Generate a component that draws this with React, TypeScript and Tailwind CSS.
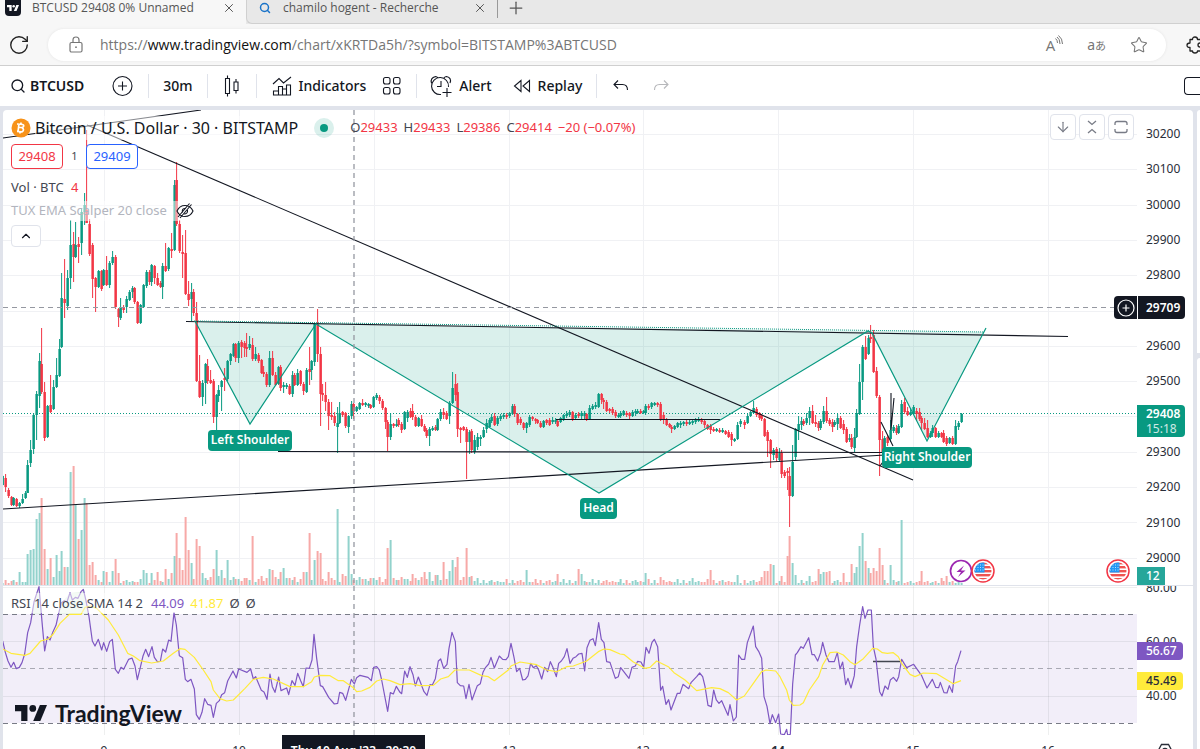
import type { ReactNode } from 'react';
import { ArrowDown, ChevronUp, Plus, RotateCw, Search, Star, X } from 'lucide-react';

// x, high, body top, body bottom, low, 1 = rising
type Candle = [number, number, number, number, number, 0 | 1];

const candles: Candle[] = [
  [3, 475, 476, 485, 486, 1], [6, 474, 478, 487, 492, 0], [9, 488, 490, 496, 498, 0], [12, 496, 497, 505, 506, 0],
  [14, 497, 498, 505, 506, 1], [17, 498, 499, 506, 507, 0], [20, 502, 503, 506, 508, 1], [23, 494, 499, 503, 504, 1],
  [26, 491, 493, 498, 499, 1], [28, 460, 465, 493, 493, 1], [31, 440, 450, 463, 467, 1], [34, 413, 415, 449, 454, 1],
  [37, 391, 394, 415, 440, 1], [40, 353, 361, 396, 408, 1], [42, 328, 364, 392, 394, 0], [45, 382, 392, 438, 441, 0],
  [48, 405, 406, 437, 438, 1], [51, 375, 405, 412, 413, 0], [54, 380, 387, 409, 410, 1], [57, 358, 375, 387, 388, 1],
  [60, 339, 349, 376, 377, 1], [62, 273, 298, 347, 348, 1], [65, 259, 299, 303, 318, 0], [68, 270, 278, 306, 310, 1],
  [71, 220, 245, 278, 289, 1], [74, 232, 244, 257, 282, 0], [76, 222, 245, 257, 258, 1], [79, 237, 244, 247, 263, 0],
  [82, 208, 212, 243, 255, 1], [85, 193, 205, 212, 225, 1], [87, 130, 210, 223, 223, 0], [90, 219, 224, 254, 256, 0],
  [93, 243, 245, 279, 298, 0], [96, 277, 278, 287, 312, 0], [99, 270, 271, 287, 288, 1], [102, 270, 271, 289, 291, 0],
  [104, 269, 270, 285, 286, 1], [107, 256, 270, 285, 286, 0], [110, 261, 263, 285, 288, 1], [113, 251, 257, 263, 265, 1],
  [116, 255, 257, 307, 309, 0], [119, 308, 309, 317, 327, 0], [121, 298, 307, 318, 320, 1], [124, 305, 307, 310, 313, 0],
  [127, 296, 299, 307, 313, 1], [130, 290, 292, 300, 301, 1], [133, 286, 288, 292, 298, 1], [135, 287, 288, 302, 304, 0],
  [138, 301, 302, 323, 324, 0], [141, 304, 305, 323, 324, 1], [144, 284, 285, 307, 308, 1], [147, 270, 272, 286, 288, 1],
  [150, 270, 272, 282, 285, 0], [152, 264, 265, 282, 286, 1], [155, 265, 266, 278, 284, 0], [158, 273, 278, 285, 286, 0],
  [161, 281, 283, 287, 288, 0], [163, 263, 266, 287, 299, 1], [166, 243, 266, 271, 272, 0], [169, 247, 248, 269, 271, 1],
  [172, 233, 249, 251, 258, 0], [175, 180, 185, 250, 251, 1], [177, 162, 180, 224, 226, 0], [180, 220, 224, 251, 253, 0],
  [183, 235, 252, 254, 278, 0], [186, 230, 253, 294, 295, 0], [189, 281, 294, 300, 306, 0], [192, 283, 292, 299, 321, 1],
  [194, 289, 292, 313, 316, 0], [197, 302, 313, 381, 382, 0], [200, 355, 381, 397, 398, 0], [203, 380, 383, 397, 406, 1],
  [206, 363, 364, 383, 404, 1], [208, 359, 366, 381, 384, 0], [211, 370, 380, 383, 384, 0], [214, 379, 381, 417, 423, 0],
  [217, 394, 395, 417, 430, 1], [219, 385, 390, 396, 402, 1], [222, 380, 381, 387, 411, 1], [225, 368, 378, 380, 391, 0],
  [228, 360, 361, 379, 381, 1], [231, 353, 354, 361, 365, 1], [234, 343, 344, 356, 357, 1], [236, 343, 344, 358, 362, 0],
  [239, 341, 343, 358, 363, 1], [242, 340, 342, 347, 358, 0], [245, 341, 343, 348, 357, 0], [247, 333, 347, 349, 357, 0],
  [250, 336, 344, 348, 350, 1], [253, 338, 345, 359, 361, 0], [256, 347, 354, 359, 361, 1], [259, 353, 355, 361, 363, 0],
  [262, 359, 360, 373, 374, 0], [264, 366, 372, 374, 377, 0], [267, 372, 374, 385, 387, 0], [270, 351, 358, 385, 387, 1],
  [273, 351, 358, 375, 376, 0], [276, 372, 375, 385, 386, 0], [279, 366, 367, 384, 385, 1], [281, 365, 367, 388, 391, 0],
  [284, 382, 385, 387, 393, 1], [287, 383, 385, 387, 389, 1], [290, 384, 386, 394, 395, 0], [293, 371, 375, 394, 397, 1],
  [295, 373, 375, 385, 386, 0], [298, 369, 373, 385, 386, 1], [301, 370, 371, 384, 386, 0], [304, 382, 384, 391, 395, 0],
  [307, 368, 370, 392, 393, 1], [310, 347, 369, 372, 385, 0], [312, 360, 361, 370, 380, 1], [315, 323, 324, 362, 366, 1],
  [318, 309, 324, 354, 362, 0], [321, 347, 354, 394, 426, 0], [323, 384, 393, 395, 401, 0], [326, 382, 395, 402, 411, 0],
  [329, 399, 402, 416, 430, 0], [332, 402, 415, 417, 420, 0], [335, 412, 416, 423, 426, 0], [338, 407, 423, 427, 453, 1],
  [340, 402, 413, 423, 424, 1], [343, 411, 412, 415, 417, 0], [346, 412, 413, 426, 428, 0], [349, 415, 416, 427, 433, 1],
  [352, 401, 404, 416, 419, 1], [354, 403, 404, 411, 419, 0], [357, 406, 407, 411, 412, 1], [360, 402, 403, 409, 410, 1],
  [363, 399, 403, 405, 406, 0], [366, 402, 403, 405, 407, 1], [369, 403, 404, 406, 408, 1], [371, 404, 405, 408, 409, 0],
  [374, 396, 397, 407, 408, 1], [377, 393, 395, 398, 400, 1], [380, 395, 397, 401, 404, 0], [383, 399, 401, 408, 410, 0],
  [386, 407, 408, 422, 429, 0], [388, 420, 422, 437, 451, 0], [391, 413, 424, 437, 440, 1], [394, 423, 424, 426, 428, 0],
  [397, 419, 424, 426, 427, 1], [399, 418, 420, 425, 427, 0], [402, 422, 424, 430, 433, 0], [405, 411, 412, 429, 430, 1],
  [408, 410, 412, 418, 422, 1], [411, 408, 411, 417, 418, 0], [413, 404, 411, 417, 420, 0], [416, 415, 417, 426, 427, 0],
  [419, 417, 418, 426, 427, 1], [422, 415, 419, 426, 427, 0], [425, 424, 426, 431, 432, 0], [427, 428, 430, 436, 438, 0],
  [430, 427, 429, 436, 446, 1], [433, 426, 428, 430, 431, 1], [436, 425, 427, 430, 431, 0], [438, 418, 419, 430, 431, 1],
  [441, 409, 412, 419, 421, 1], [444, 408, 412, 415, 419, 0], [447, 411, 413, 419, 420, 0], [450, 401, 403, 416, 424, 1],
  [453, 372, 388, 403, 404, 1], [456, 374, 384, 395, 401, 0], [458, 383, 392, 429, 437, 0], [461, 427, 428, 430, 443, 0],
  [464, 426, 427, 430, 431, 0], [467, 427, 429, 442, 479, 0], [470, 430, 432, 442, 454, 1], [472, 429, 431, 450, 453, 0],
  [475, 435, 440, 452, 454, 1], [478, 433, 437, 447, 450, 1], [481, 435, 437, 439, 446, 1], [484, 427, 430, 437, 438, 1],
  [487, 419, 423, 429, 433, 1], [490, 418, 420, 427, 428, 1], [492, 414, 417, 421, 423, 1], [495, 413, 416, 425, 426, 0],
  [498, 416, 418, 424, 426, 1], [501, 414, 416, 419, 421, 1], [504, 413, 415, 417, 419, 1], [507, 413, 415, 417, 419, 0],
  [510, 412, 413, 416, 418, 1], [513, 404, 406, 414, 415, 1], [515, 404, 406, 414, 417, 0], [518, 413, 414, 423, 425, 0],
  [521, 417, 419, 423, 425, 0], [524, 422, 423, 428, 430, 0], [527, 422, 423, 428, 433, 1], [530, 415, 417, 425, 427, 1],
  [533, 416, 417, 419, 421, 0], [536, 418, 419, 421, 424, 0], [538, 419, 420, 423, 424, 0], [541, 421, 423, 427, 428, 0],
  [544, 420, 421, 427, 428, 1], [547, 419, 420, 423, 425, 0], [550, 418, 420, 425, 426, 0], [553, 417, 420, 422, 424, 1],
  [556, 418, 420, 422, 424, 1], [558, 419, 421, 426, 427, 0], [561, 417, 418, 422, 423, 1], [564, 414, 415, 419, 421, 1],
  [567, 411, 414, 416, 418, 1], [570, 410, 412, 415, 417, 1], [573, 411, 412, 419, 421, 0], [576, 413, 415, 418, 420, 1],
  [579, 412, 414, 416, 418, 0], [582, 411, 413, 416, 419, 1], [585, 411, 413, 416, 419, 1], [587, 413, 414, 420, 421, 0],
  [590, 405, 408, 419, 420, 1], [593, 404, 406, 409, 410, 1], [596, 402, 405, 407, 409, 1], [599, 393, 394, 407, 408, 1],
  [602, 393, 394, 400, 404, 0], [604, 398, 400, 402, 409, 0], [607, 400, 402, 411, 412, 0], [610, 408, 409, 411, 413, 0],
  [613, 407, 409, 413, 415, 0], [616, 410, 412, 416, 418, 0], [619, 413, 415, 417, 418, 1], [621, 411, 413, 416, 418, 1],
  [624, 410, 411, 415, 416, 1], [627, 411, 413, 415, 417, 0], [630, 412, 413, 416, 420, 0], [633, 410, 412, 416, 417, 1],
  [636, 409, 411, 413, 416, 1], [638, 409, 411, 413, 414, 1], [641, 409, 411, 413, 414, 0], [644, 410, 411, 413, 414, 1],
  [646, 404, 406, 413, 415, 1], [649, 404, 406, 408, 410, 0], [652, 402, 403, 407, 409, 1], [655, 402, 403, 405, 406, 1],
  [658, 402, 403, 405, 407, 0], [661, 402, 404, 420, 421, 0], [664, 412, 415, 420, 424, 0], [667, 418, 420, 425, 426, 0],
  [670, 423, 424, 427, 428, 0], [672, 425, 427, 429, 433, 0], [675, 425, 426, 429, 430, 1], [678, 422, 423, 427, 428, 1],
  [681, 421, 423, 425, 428, 1], [684, 421, 422, 424, 426, 1], [687, 420, 422, 424, 426, 0], [690, 420, 422, 424, 425, 1],
  [693, 419, 421, 423, 425, 1], [696, 418, 420, 422, 424, 1], [699, 417, 419, 421, 422, 1], [702, 418, 419, 422, 424, 0],
  [705, 420, 421, 425, 428, 0], [708, 424, 425, 429, 430, 0], [711, 424, 426, 430, 434, 0], [714, 427, 429, 431, 432, 0],
  [717, 428, 429, 431, 432, 1], [720, 428, 430, 432, 433, 0], [723, 428, 430, 432, 433, 1], [726, 430, 431, 434, 435, 0],
  [729, 430, 432, 437, 438, 0], [732, 432, 434, 440, 446, 0], [735, 438, 439, 441, 442, 1], [738, 422, 425, 439, 440, 1],
  [741, 419, 421, 424, 427, 1], [745, 420, 422, 425, 429, 0], [748, 414, 416, 423, 424, 1], [751, 411, 412, 416, 417, 1],
  [754, 401, 408, 413, 414, 1], [757, 407, 409, 415, 417, 0], [760, 412, 413, 418, 420, 0], [762, 414, 416, 419, 421, 0],
  [765, 418, 419, 436, 437, 0], [768, 430, 432, 441, 457, 0], [771, 439, 440, 454, 468, 0], [774, 448, 450, 455, 460, 1],
  [777, 447, 449, 458, 461, 0], [780, 448, 453, 460, 462, 1], [782, 450, 453, 474, 478, 0], [785, 470, 472, 476, 478, 0],
  [788, 468, 471, 473, 490, 0], [790, 467, 476, 496, 527, 0], [793, 445, 462, 496, 497, 1], [796, 428, 429, 457, 460, 1],
  [799, 416, 424, 430, 440, 1], [802, 417, 421, 425, 430, 1], [804, 419, 421, 424, 426, 0], [807, 413, 418, 423, 425, 1],
  [810, 407, 411, 418, 425, 1], [813, 405, 411, 423, 424, 0], [816, 415, 422, 424, 427, 0], [819, 421, 423, 428, 431, 0],
  [821, 419, 421, 428, 430, 1], [824, 406, 411, 422, 424, 1], [827, 397, 411, 421, 423, 0], [830, 418, 420, 424, 426, 0],
  [833, 419, 422, 427, 432, 0], [835, 420, 422, 425, 427, 1], [838, 414, 418, 424, 430, 1], [841, 416, 418, 428, 429, 0],
  [844, 420, 424, 430, 434, 0], [847, 427, 429, 442, 443, 0], [850, 434, 438, 440, 442, 1], [852, 434, 438, 447, 449, 0],
  [855, 428, 437, 448, 452, 1], [857, 409, 413, 437, 438, 1], [860, 364, 382, 414, 415, 1], [863, 345, 347, 382, 400, 1],
  [866, 336, 347, 359, 360, 0], [869, 335, 338, 354, 355, 1], [871, 325, 337, 339, 343, 0], [874, 330, 335, 372, 373, 0],
  [877, 367, 371, 396, 398, 0], [880, 395, 397, 440, 476, 0], [883, 431, 439, 452, 463, 0], [885, 436, 438, 450, 452, 1],
  [888, 435, 437, 443, 446, 0], [891, 420, 430, 439, 442, 1], [894, 425, 427, 431, 433, 1], [897, 425, 428, 433, 435, 0],
  [899, 424, 426, 433, 434, 1], [902, 400, 404, 427, 428, 1], [905, 398, 402, 412, 414, 0], [908, 407, 411, 415, 416, 0],
  [911, 408, 412, 415, 416, 1], [914, 405, 407, 414, 415, 1], [917, 408, 411, 414, 421, 0], [920, 408, 412, 419, 421, 0],
  [922, 416, 418, 423, 430, 0], [925, 418, 423, 429, 430, 0], [928, 420, 428, 437, 438, 0], [931, 431, 433, 437, 438, 1],
  [933, 425, 428, 433, 437, 1], [936, 427, 428, 437, 438, 0], [939, 431, 433, 437, 438, 1], [942, 432, 433, 437, 438, 0],
  [944, 430, 433, 442, 443, 0], [947, 436, 438, 444, 446, 0], [950, 437, 438, 443, 444, 1], [953, 436, 438, 444, 445, 0],
  [956, 420, 426, 444, 445, 1], [959, 421, 423, 427, 430, 1], [962, 413, 414, 422, 423, 1],
];

// Volume spikes by candle x; every other candle gets a small bar.
const spikes: Record<number, number> = {
  20: 13, 28: 31, 31: 35, 34: 36, 37: 66, 40: 72, 42: 87, 45: 36, 48: 16, 51: 27, 54: 8, 57: 30, 60: 14, 62: 34,
  65: 18, 68: 18, 71: 113, 74: 119, 76: 80, 79: 46, 82: 55, 85: 87, 87: 82, 90: 20, 93: 23, 96: 10, 104: 14, 107: 13,
  113: 14, 116: 26, 119: 12, 144: 15, 147: 12, 152: 12, 158: 13, 166: 16, 172: 12, 175: 29, 177: 52, 180: 27, 183: 15,
  186: 68, 189: 35, 192: 22, 197: 46, 200: 39, 203: 12, 214: 16, 217: 35, 222: 15, 228: 25, 253: 49, 270: 16,
  273: 15, 281: 13, 284: 17, 304: 13, 307: 13, 310: 52, 315: 25, 318: 34, 321: 32, 329: 13, 338: 76, 343: 11,
  349: 49, 352: 11, 388: 37, 391: 45, 413: 11, 425: 13, 430: 13, 436: 10, 438: 10, 444: 23, 450: 14, 453: 25, 456: 18,
  458: 28, 467: 37, 470: 8, 527: 15, 558: 11, 579: 16, 582: 11, 646: 12, 661: 8, 693: 7, 711: 15, 738: 10, 762: 8,
  765: 14, 768: 14, 771: 21, 774: 20, 782: 9, 788: 29, 790: 49, 793: 22, 796: 10, 810: 9, 819: 16, 821: 11, 824: 13,
  827: 13, 830: 14, 844: 12, 852: 21, 855: 12, 857: 18, 860: 39, 863: 52, 866: 24, 869: 17, 871: 12, 874: 17,
  877: 14, 880: 37, 883: 20, 891: 20, 902: 65, 922: 14, 942: 7, 947: 9, 962: 2,
};

const smallVolume = (x: number, i: number) => {
  const wave = (i * 7) % 5;
  if (x > 900) return 2 + (i % 3);
  if (x > 180 && x < 480) return 3 + wave + (i % 3);
  return 2 + (wave % 4) + (i % 2);
};

const rsi =
  '8,183 16,217 24,243 33,262 41,247 49,266 58,262 66,248 74,222 83,158 92,128 102,66 109,44 117,20 126,125 134,213 142,170 150,180 159,155 168,136 176,100 184,68 193,62 201,66 210,38 217,60 226,52 234,55 243,35 250,28 258,62 267,110 277,183 285,198 295,178 305,210 311,188 320,214 329,185 337,178 346,268 355,280 363,262 371,268 386,238 396,234 405,258 412,299 421,262 429,228 437,208 446,230 456,200 463,232 472,245 481,244 488,207 497,216 506,180 513,184 522,98 529,135 538,227 548,233 556,298 563,305 573,298 583,327 589,404 598,418 606,397 614,356 623,373 633,376 640,412 649,370 658,362 665,344 674,338 683,303 699,273 709,294 716,267 741,277 752,267 760,297 767,290 784,331 792,336 801,358 810,282 817,320 825,337 836,291 843,332 860,324 866,344 876,302 885,316 893,280 902,302 910,320 918,264 928,265 936,240 942,163 950,235 961,317 968,320 986,352 1003,372 1013,370 1019,337 1028,340 1037,361 1054,298 1063,312 1070,293 1080,286 1104,292 1114,302 1121,262 1130,260 1138,270 1145,300 1163,394 1171,338 1180,342 1189,319 1200,337 ' +
  '1205,341 1214,273 1222,292 1230,260 1239,284 1246,318 1255,291 1272,335 1281,346 1290,314 1297,315 1306,296 1315,243 1322,237 1331,265 1341,253 1347,205 1356,157 1366,185 1372,308 1381,317 1391,318 1398,356 1407,313 1416,360 1432,317 1441,311 1449,277 1457,262 1466,252 1473,232 1483,264 1498,228 1508,238 1518,239 1525,230 1533,190 1542,232 1550,275 1559,265 1568,300 1576,298 1584,288 1592,250 1600,263 1609,257 1616,270 1625,297 1634,262 1643,275 1651,245 1660,265 1669,290 1676,250 1684,243 1693,230 1701,206 1710,250 1719,235 1728,230 1736,222 1746,220 1754,273 1761,203 1770,181 1779,176 1786,197 1796,128 1804,178 1812,188 1820,245 1830,247 1846,295 1855,290 1862,263 1887,295 1896,262 1906,258 1913,244 1923,246 1931,262 1938,202 1947,220 1956,187 1963,178 1973,200 1982,331 1988,319 1998,373 2006,359 2013,390 2032,340 2040,340 2049,313 2066,326 2073,308 2090,290 2099,279 2108,290 2115,319 2124,376 2134,380 2141,330 2149,360 2157,370 2165,362 2184,406 2190,374 2200,423 2209,411 2216,225 2225,238 2234,238 2242,188 2260,138 2267,200 2276,214 2285,235 2292,350 2301,379 2310,431 2317,404 2327,428 2336,402 2342,462 2353,464 2360,448 2363,465 2371,463 2378,312 2386,225 2392,218 ' +
  '2403,200 2410,205 2426,173 2436,224 2443,224 2453,243 2462,218 2468,187 2478,225 2487,245 2503,245 2512,218 2520,267 2528,246 2537,314 2544,295 2553,324 2563,287 2570,200 2579,135 2588,80 2595,115 2604,90 2614,90 2620,200 2628,237 2639,335 2646,348 2655,318 2664,328 2671,300 2680,292 2690,304 2696,290 2705,238 2720,263 2741,253 2765,287 2781,324 2797,298 2807,322 2816,323 2821,307 2832,338 2841,339 2848,317 2857,337 2867,258 2873,245 2883,212';

const sma =
  '8,207 33,220 75,226 90,220 122,183 145,177 160,162 180,130 208,103 243,103 255,82 270,78 290,85 325,120 355,165 383,220 400,228 420,242 455,249 490,243 520,220 540,206 555,208 583,232 610,270 633,305 640,330 660,356 680,363 700,360 735,325 760,298 790,292 820,297 870,320 910,320 935,305 943,291 960,286 990,287 1015,302 1030,302 1060,323 1070,335 1085,333 1110,322 1130,303 1150,297 1170,302 1200,314 ' +
  '1230,311 1260,317 1300,316 1322,297 1345,290 1365,270 1408,270 1445,287 1465,290 1483,302 1525,270 1533,258 1560,246 1610,254 1640,270 1670,275 1700,260 1720,258 1760,243 1795,215 1812,207 1830,209 1860,222 1873,224 1900,246 1935,265 1950,262 1970,243 2005,260 2022,278 2055,300 2090,332 2135,323 2160,326 2185,338 2210,360 2233,348 2260,310 2285,275 2298,270 2327,273 2340,290 2360,330 2368,360 2380,376 2400,375 ' +
  '2410,368 2428,330 2456,290 2468,255 2490,218 2510,216 2530,225 2550,245 2565,254 2590,236 2618,205 2632,207 2647,218 2662,220 2680,218 2695,230 2705,250 2730,283 2745,290 2770,279 2810,281 2860,311 2883,302';

const days = [104, 239, 374, 509, 643, 778, 913, 1048];
// the crosshair date covers the 11th
const dayLabels = ['9', '10', '', '12', '13', '14', '15', '16'];
const prices = [30200, 30100, 30000, 29900, 29800, 29700, 29600, 29500, 29400, 29300, 29200, 29100, 29000];
// levels whose label is covered by the crosshair or last price tag
const covered = [29700, 29400];

const gridY = (i: number) => Math.round(134 + i * 35.3) + 0.5;

const PatternLabel = ({ x, y, width, text }: { x: number; y: number; width: number; text: string }) => (
  <g>
    <rect x={x} y={y} width={width} height="21" rx="4" fill="#089981" />
    <text x={x + width / 2} y={y + 14} textAnchor="middle" fill="#fff" fontSize="12" fontWeight="600">
      {text}
    </text>
  </g>
);

const UsFlag = ({ cx }: { cx: number }) => (
  <g transform={`translate(${cx} 571)`}>
    <circle r="11" fill="#fff" stroke="#f23645" strokeWidth="1.5" />
    <clipPath id={`flag-${cx}`}>
      <circle r="8.5" />
    </clipPath>
    <g clipPath={`url(#flag-${cx})`}>
      <rect x="-9" y="-9" width="18" height="18" fill="#fff" />
      {[-8, -4, 0, 4, 8].map((y) => (
        <rect key={y} x="-9" y={y - 1} width="18" height="2.4" fill="#ef5350" />
      ))}
      <rect x="-9" y="-9" width="10.5" height="10.5" fill="#2196f3" />
      {[-6, -3.5, -1].map((y) => (
        <path key={y} d={`M-8 ${y}H1`} stroke="#bbdefb" strokeDasharray="1 1.5" />
      ))}
    </g>
  </g>
);

const PriceChart = () => (
  <svg width="1134" height="475" viewBox="3 110 1134 475" className="block shrink-0" aria-label="BTCUSD price chart">
    <g stroke="#f0f1f4">
      {days.map((x) => (
        <path key={x} d={`M${x + 0.5} 110V585`} />
      ))}
      {prices.map((p, i) => (
        <path key={p} d={`M3 ${gridY(i)}H1137`} />
      ))}
    </g>

    {candles.map(([x, , , , , up], i) => {
      const h = spikes[x] ?? smallVolume(x, i);
      return <rect key={x} x={x - 1.4} y={585 - h} width="2" height={h} fill={up ? '#92d2cc' : '#f7a9a7'} />;
    })}

    <g fill="#089981" fillOpacity="0.15">
      <path d="M195 321L250 424L316 324Z" />
      <path d="M316 324L599 493L868 331Z" />
      <path d="M870 331L927 441L984 332Z" />
    </g>

    <path d="M3 413.5H1137" stroke="#089981" strokeDasharray="1 2" />
    {candles.map(([x, high, top, bottom, low, up]) => (
      <g key={x} fill={up ? '#089981' : '#f23645'}>
        <rect x={x - 0.9} y={high} width="1" height={low - high} />
        <rect x={x - 1.6} y={top} width="2.5" height={bottom - top} />
      </g>
    ))}

    <g fill="none" stroke="#131722" strokeWidth="1.1">
      <path d="M3 138L201 110" />
      <path d="M87 125L913 480" />
      <path d="M186 321.5L1068 336.5" />
      <path d="M3 509L885 455" />
      <path d="M278 451.5L882 452.5" />
      <path d="M556 419.5H720" />
      <path d="M891 393V430L894 398M881 422L893 446M880 466L885 459" />
    </g>

    <g fill="none" stroke="#089981">
      <path d="M194 321L984 332" strokeDasharray="1 1" />
      <path d="M195 321L250 424L316 324L599 493L868 331L872 333L927 441L986 328" strokeWidth="1.2" />
    </g>

    <g fontFamily='"Noto Sans", sans-serif'>
      <PatternLabel x={208} y={430} width={84} text="Left Shoulder" />
      <PatternLabel x={580} y={498} width={37} text="Head" />
      <PatternLabel x={882} y={447} width={90} text="Right Shoulder" />
    </g>

    <g stroke="#9598a1" fill="none">
      <path d="M3 307.5H1114" strokeDasharray="5 4" />
      <path d="M354 110V585" strokeDasharray="5 4" strokeWidth="1.3" />
    </g>

    <circle cx="961" cy="571" r="10.5" fill="#fff" stroke="#9c27b0" strokeWidth="1.7" />
    <path d="M964 565.5L956.5 572H961L958 577L965.5 570.5H961Z" fill="#9c27b0" />
    <UsFlag cx={983} />
    <UsFlag cx={1118} />
  </svg>
);

const RsiChart = () => (
  <svg width="1134" height="149" viewBox="3 586 1134 149" className="block shrink-0" aria-label="RSI chart">
    <rect x="3" y="614" width="1134" height="109" fill="#7e57c2" fillOpacity="0.1" />
    <g stroke="#131722" strokeOpacity="0.07">
      {days.map((x) => (
        <path key={x} d={`M${x + 0.5} 586V735`} />
      ))}
      <path d="M3 587.5H1137M3 641.5H1137M3 696.5H1137" />
    </g>
    <g stroke="#787b86" strokeDasharray="5 4">
      <path d="M3 614.5H1137M3 723.5H1137" />
      <path d="M3 668.5H1137" strokeOpacity="0.6" />
      <path d="M354 586V735" stroke="#9598a1" strokeWidth="1.3" />
    </g>
    <path d="M31 614L39 587L42 614ZM58 614L62 602L70 593L81 592L84 589L88 614Z" fill="#4caf50" fillOpacity="0.12" />
    <path d="M873 661.5H900" stroke="#434651" strokeWidth="1.5" />
    <g transform="translate(0 580) scale(0.33333)" fill="none" strokeWidth="3.6" strokeLinejoin="round">
      <polyline points={rsi} stroke="#7e57c2" />
      <polyline points={sma} stroke="#ffeb3b" />
    </g>
  </svg>
);

const Divider = () => <span className="h-6 w-px bg-[#e0e3eb]" />;

const BarIcon = ({ children, className = 'h-7 w-7' }: { children: ReactNode; className?: string }) => (
  <svg viewBox="0 0 28 28" className={className} fill="none" stroke="#131722" strokeWidth="1.1">
    {children}
  </svg>
);

const BrandMark = ({ className }: { className: string }) => (
  <svg viewBox="0 0 36 18" className={className} fill="currentColor">
    <path d="M0 0H14V18H7V7H0Z" />
    <circle cx="20" cy="3.8" r="3.8" />
    <path d="M28 0H36L28.500 18H20.500Z" />
  </svg>
);

const TabStrip = () => (
  <div className="flex h-6 bg-[#e8e8e8] text-[12px] text-[#555]">
    <div className="flex h-6 w-[246px] items-start bg-[#f7f7f7] pl-[5px]">
      <span className="flex h-4 w-4 items-center justify-center rounded-b-sm bg-[#131722] text-white">
        <BrandMark className="h-1.5 w-3" />
      </span>
      <span className="ml-[11px] flex-1 leading-4">BTCUSD 29408 0% Unnamed</span>
      <button aria-label="Close tab" className="mr-2 flex h-4 w-4 items-center">
        <X className="h-3.5 w-3.5" strokeWidth={1.7} />
      </button>
    </div>
    <div className="flex w-[251px] items-start rounded-bl-md border-b border-l border-[#d0d0d0] pl-3">
      <Search className="mt-0.5 h-3 w-3 text-[#1a73c8]" strokeWidth={3} />
      <span className="ml-3 flex-1 leading-4">chamilo hogent - Recherche</span>
      <button aria-label="Close tab" className="mr-2 flex h-4 w-4 items-center">
        <X className="h-3.5 w-3.5" strokeWidth={1.7} />
      </button>
    </div>
    <div className="flex flex-1 items-start border-b border-[#d0d0d0]">
      <span className="h-[18px] w-px bg-[#999]" />
      <button aria-label="New tab" className="ml-2">
        <Plus className="-mt-0.5 h-5 w-5" strokeWidth={1.5} />
      </button>
    </div>
  </div>
);

const AddressBar = () => (
  <div className="flex h-[42px] items-center border-b border-[#cfcfcf] bg-[#f7f7f7]">
    <button aria-label="Reload" className="ml-2">
      <RotateCw className="h-[22px] w-[22px] text-[#222]" strokeWidth={1.5} />
    </button>
    <div className="ml-[18px] flex h-8 flex-1 items-center rounded-full bg-white pr-[18px] pl-5 text-[14px] text-[#767676] shadow-[0_0_3px_#e4e4e4]">
      <svg viewBox="0 0 16 18" className="h-[18px] w-4" fill="none" stroke="currentColor" strokeWidth="1.200">
        <rect x="2" y="6.500" width="12" height="9.500" rx="1.500" />
        <path d="M5 6.500V4Q5 1 8 1Q11 1 11 4V6.500" />
        <circle cx="8" cy="11.200" r="0.900" fill="currentColor" stroke="none" />
      </svg>
      <a href="https://www.tradingview.com/chart/xKRTDa5h/?symbol=BITSTAMP%3ABTCUSD" className="ml-4 flex-1">
        https://<span className="text-[#111]">www.tradingview.com</span>/chart/xKRTDa5h/?symbol=BITSTAMP%3ABTCUSD
      </a>
      <button aria-label="Read aloud" className="flex">
        <span className="text-[15px] leading-5">A</span>
        <svg viewBox="0 0 8 12" className="h-3 w-2" fill="none" stroke="currentColor">
          <path d="M0.500 3.500Q2.500 5 2.500 8M2 2Q5 4 5 9M3.500 0.500Q7.500 3.500 7.500 9" />
        </svg>
      </button>
      <button aria-label="Translate" className="ml-6 flex items-baseline font-['Noto_Sans','Noto_Sans_CJK_JP',sans-serif]">
        <span className="text-[14px] leading-5">a</span>
        <span className="text-[11px]">あ</span>
      </button>
      <button aria-label="Favorite" className="ml-6">
        <Star className="h-[18px] w-[18px]" strokeWidth={1.4} />
      </button>
    </div>
    <button aria-label="Extensions" className="ml-5 w-3.5 overflow-hidden">
      <svg viewBox="0 0 18 18" className="h-[18px] w-[18px]" fill="none" stroke="#222" strokeWidth="1.300" strokeLinejoin="round">
        <path d="M4 3.500H6.500Q6.500 1 9 1Q11.500 1 11.500 3.500H15V7H14Q12 7 12 9Q12 11 14 11H15V15H11.500Q11.500 17 9 17Q6.500 17 6.500 15H4V11.500Q1 11.500 1 9.200Q1 7 4 7Z" />
      </svg>
    </button>
  </div>
);

const Toolbar = () => (
  <div className="flex h-10 items-center bg-white pb-px text-[14px] font-medium text-[#131722]">
    <button className="ml-2.5 flex items-center gap-1 font-semibold">
      <Search className="h-4 w-4" strokeWidth={2} />
      BTCUSD
    </button>
    <button aria-label="Compare" className="mr-3 ml-6">
      <BarIcon>
        <circle cx="14.500" cy="14" r="9.500" />
        <path d="M14.500 9.500V18.500M10 14H19" />
      </BarIcon>
    </button>
    <Divider />
    <button className="mx-3.5">30m</button>
    <Divider />
    <button aria-label="Candles" className="mx-2.5">
      <BarIcon>
        <path d="M7.500 6.500H11.500V21.500H7.500ZM9.500 3.500V6.500M9.500 21.500V24.500M16 10H20V18.500H16ZM18 7V10M18 18.500V21.500" />
      </BarIcon>
    </button>
    <Divider />
    <button className="ml-3 flex items-center gap-0.5">
      <BarIcon>
        <path d="M4.500 23V19H9.500V23ZM9.500 23V14.500H13.500V23ZM13.500 23V17H17.500V23ZM17.500 23V13H21.500V23ZM4 12L10 6.500L14.500 11L22 5" />
      </BarIcon>
      Indicators
    </button>
    <button aria-label="Layouts" className="mr-2.5 ml-3">
      <BarIcon>
        <rect x="5.500" y="5.500" width="6.500" height="6.500" rx="2" />
        <rect x="15.500" y="5.500" width="6.500" height="6.500" rx="2" />
        <rect x="5.500" y="15.500" width="6.500" height="6.500" rx="2" />
        <rect x="15.500" y="15.500" width="6.500" height="6.500" rx="2" />
      </BarIcon>
    </button>
    <Divider />
    <button className="ml-2.5 flex items-center gap-1">
      <BarIcon>
        <path d="M21.500 15A8.500 8.500 0 1 0 14 22.500M14 9V14.500H10M4.500 11Q3 6 8.500 4.500Q10 4.500 11 6M23 11Q25 6 19.500 4.500Q18 4.500 17 6M20 16V25M15.500 20.500H24.500" />
      </BarIcon>
      Alert
    </button>
    <button className="mr-3.5 ml-4 flex items-center gap-0.5">
      <BarIcon>
        <path d="M13 8.500V19.500L6.500 14ZM21.500 8.500V19.500L15 14Z" />
      </BarIcon>
      Replay
    </button>
    <Divider />
    <button aria-label="Undo" className="ml-2.5">
      <BarIcon>
        <path d="M11 8.500L7 12.500L11 16.500M7 12.500H15.500Q20.500 12.500 20.500 18" />
      </BarIcon>
    </button>
    <button aria-label="Redo" className="ml-3 opacity-30">
      <BarIcon>
        <path d="M17 8.500L21 12.500L17 16.500M21 12.500H12.500Q7.500 12.500 7.500 18" />
      </BarIcon>
    </button>
    <button aria-label="Select layout" className="ml-auto h-[18px] w-4 rounded-l border border-r-0 border-[#131722]" />
  </div>
);

const ohlc = [
  ['O', '29433'],
  ['H', '29433'],
  ['L', '29386'],
  ['C', '29414'],
];

const Legend = () => (
  <div className="absolute top-1.5 left-2 flex flex-col items-start text-[13px] text-[#434651]">
    <div className="flex h-6 items-center">
      <svg viewBox="0 0 20 20" className="h-5 w-5">
        <circle cx="10" cy="10" r="9.500" fill="#f7931a" />
        <path d="M8 5.500L7 14M6 6L11.500 6.500Q14 7.500 11.500 9.500L7.500 9.500M11 9.700Q14 11.500 11 13.800L6 13.500M10 4.500L9.800 6M9 14V15.500" fill="none" stroke="#fff" strokeWidth="1.700" />
      </svg>
      <h1 className="ml-1 bg-white/50 text-[16px] leading-6 text-[#131722]">Bitcoin / U.S. Dollar · 30 · BITSTAMP</h1>
      <span className="ml-4 flex h-5 w-5 items-center justify-center rounded-full bg-[#089981]/15">
        <span className="h-2 w-2 rounded-full bg-[#089981]" />
      </span>
      <div className="ml-4 flex gap-1.5 text-[#f23645]">
        {ohlc.map(([name, value]) => (
          <span key={name}>
            <span className="text-[#434651]">{name}</span>
            {value}
          </span>
        ))}
        <span>−20 (−0.07%)</span>
      </div>
    </div>
    <div className="mt-1 flex items-center">
      <button className="h-[25px] w-[52px] rounded border border-[#f23645] bg-white text-[#f23645]">29408</button>
      <span className="w-[23px] text-center text-[11px]">1</span>
      <button className="h-[25px] w-[52px] rounded border border-[#2962ff] bg-white text-[#2962ff]">29409</button>
    </div>
    <p className="mt-2 bg-white/50 leading-5">
      Vol · BTC <span className="ml-1 text-[#f23645]">4</span>
    </p>
    <div className="mt-1 flex h-5 items-center bg-white/50">
      <span className="text-[#b2b5be]">TUX EMA Scalper 20 close</span>
      <svg viewBox="0 0 20 16" className="ml-2 h-4 w-5" fill="none" stroke="#131722" strokeWidth="1.100">
        <path d="M2 8Q4.500 2.500 10 2.500Q15.500 2.500 18 8Q15.500 13.500 10 13.500Q4.500 13.500 2 8ZM16.500 1.500L5 15M14.500 0.500L3 14" />
        <path d="M12.500 7Q13 11 9 11M7.500 9.500Q6.500 5.500 10.500 5.200" />
      </svg>
    </div>
    <button aria-label="Collapse legend" className="mt-1 flex h-[22px] w-[30px] items-center justify-center rounded border border-[#e0e3eb] bg-white">
      <ChevronUp className="h-3.5 w-3.5 text-[#131722]" />
    </button>
  </div>
);

const paneButton = 'flex h-[26px] w-[26px] items-center justify-center rounded border border-[#e0e3eb] bg-white text-[#787b86]';

const PaneButtons = () => (
  <div className="absolute top-1 right-[3px] flex gap-[3px]">
    <button aria-label="Move pane down" className={paneButton}>
      <ArrowDown className="h-4 w-4" strokeWidth={1.7} />
    </button>
    <button aria-label="Collapse pane" className={paneButton}>
      <svg viewBox="0 0 16 16" className="h-4 w-4" fill="none" stroke="currentColor" strokeWidth="1.300">
        <path d="M4 2L8 5.500L12 2M4 14L8 10.500L12 14" />
      </svg>
    </button>
    <button aria-label="Maximize pane" className={paneButton}>
      <svg viewBox="0 0 16 16" className="h-4 w-4" fill="none" stroke="currentColor" strokeWidth="1.300">
        <path d="M2 6V4.500Q2 2.500 4 2.500H12Q14 2.500 14 4.500V6M2 10V11.500Q2 13.500 4 13.500H12Q14 13.500 14 11.500V10" />
      </svg>
    </button>
  </div>
);

const PriceAxis = () => (
  <div className="relative h-[475px] w-14 shrink-0 text-[12px] text-[#2a2e39]">
    <div className="flex h-[458px] flex-col justify-between pt-3.5 pl-[9px]">
      {prices.map((p) => (
        <span key={p} className="h-5 leading-5">
          {covered.includes(p) ? '' : p}
        </span>
      ))}
    </div>
    <div className="absolute top-[186px] -left-[23px] flex h-[23px] font-semibold text-white">
      <button aria-label="Add alert" className="flex w-[23px] items-center justify-center rounded-l-sm bg-[#131722]">
        <svg viewBox="0 0 18 18" className="h-[18px] w-[18px]" fill="none" stroke="currentColor" strokeWidth="1.200">
          <circle cx="9" cy="9" r="8" />
          <path d="M9 5.500V12.500M5.500 9H12.500" />
        </svg>
      </button>
      <span className="ml-px w-[47px] rounded-r-sm bg-[#131722] pl-2 leading-[23px]">29709</span>
    </div>
    <div className="absolute top-[295px] left-0 flex h-8 w-12 flex-col rounded-r-sm bg-[#089981] pt-px pl-[9px] leading-[15px] text-white">
      <span className="font-semibold">29408</span>
      <span className="opacity-80">15:18</span>
    </div>
    <span className="absolute top-[457px] left-0 h-[18px] w-7 bg-[#26a69a] pl-[9px] leading-[18px] font-medium text-white">12</span>
  </div>
);

const RsiAxis = () => (
  <div className="relative h-[149px] w-14 shrink-0 overflow-hidden text-[12px] text-[#2a2e39]">
    <div className="-mt-2 flex flex-col gap-[34px] pl-[9px] leading-5">
      <span>80.00</span>
      <span>60.00</span>
      <span>40.00</span>
    </div>
    <span className="absolute top-[56px] left-0 h-[18px] w-[46px] rounded-r-sm bg-[#7e57c2] pl-[9px] leading-[18px] font-medium text-white">56.67</span>
    <span className="absolute top-[86px] left-0 h-[18px] w-[46px] rounded-r-sm bg-[#ffeb3b] pl-[9px] leading-[18px] font-medium">45.49</span>
  </div>
);

const TimeAxis = () => (
  <div className="relative h-7 text-[12px] text-[#2a2e39]">
    {/* day marks sit on the time scale, at the same x as the grid lines */}
    {days.map((x, i) => (
      <span
        key={x}
        className={`absolute top-1.5 -translate-x-1/2 leading-5 ${i === 5 ? 'font-bold' : ''}`}
        style={{ left: x - 3 }}
      >
        {dayLabels[i]}
      </span>
    ))}
    <span className="absolute top-0 left-[279px] h-7 w-[143px] bg-[#131722] pt-1.5 text-center leading-5 font-semibold text-white">
      Thu 10 Aug '23&nbsp;&nbsp; 20:30
    </span>
    <button aria-label="Scale settings" className="absolute top-2 right-5">
      <svg viewBox="0 0 16 16" className="h-4 w-4" fill="none" stroke="#2a2e39" strokeWidth="1.300">
        <path d="M4.500 1.500H11.500L15 8L11.500 14.500H4.500L1 8Z" />
        <circle cx="8" cy="8" r="2.500" />
      </svg>
    </button>
  </div>
);

const App = () => {
  return (
    <div className="flex h-screen flex-col overflow-hidden bg-[#e0e3eb] font-['Noto_Sans',sans-serif]">
      <div className="shrink-0 font-['Open_Sans',sans-serif]">
        <TabStrip />
        <AddressBar />
      </div>
      <div className="shrink-0">
        <Toolbar />
      </div>

      <div className="flex min-h-0 flex-1 gap-1 overflow-hidden pt-1 pl-[3px]">
        <main className="min-w-0 flex-1 overflow-hidden rounded-t bg-white">
          <section className="flex border-b border-[#e0e3eb]">
            <div className="relative min-w-0 flex-1 overflow-hidden">
              <PriceChart />
              <Legend />
              <PaneButtons />
            </div>
            <PriceAxis />
          </section>
          <section className="flex">
            <div className="relative min-w-0 flex-1 overflow-hidden">
              <RsiChart />
              <div className="absolute top-[7px] left-2 flex bg-white/50 text-[13px] leading-5 text-[#434651]">
                <span>RSI 14 close SMA 14 2</span>
                <span className="ml-2 text-[#7e57c2]">44.09</span>
                <span className="ml-1.5 text-[#ffeb3b]">41.87</span>
                <span className="ml-1.5">Ø</span>
                <span className="ml-1.5">Ø</span>
              </div>
              <a href="#" className="absolute bottom-2 left-3 flex items-center font-['Lato',sans-serif] text-[23px] leading-7 font-bold text-[#131722]">
                <BrandMark className="mr-2 h-4 w-8" />
                TradingView
              </a>
            </div>
            <RsiAxis />
          </section>
          <TimeAxis />
        </main>

        <aside className="flex w-[3px] shrink-0 flex-col gap-[5px]">
          <div className="h-[243px] rounded-tl bg-white" />
          <div className="flex-1 rounded-tl bg-white" />
        </aside>
      </div>
    </div>
  );
};

export default App;
